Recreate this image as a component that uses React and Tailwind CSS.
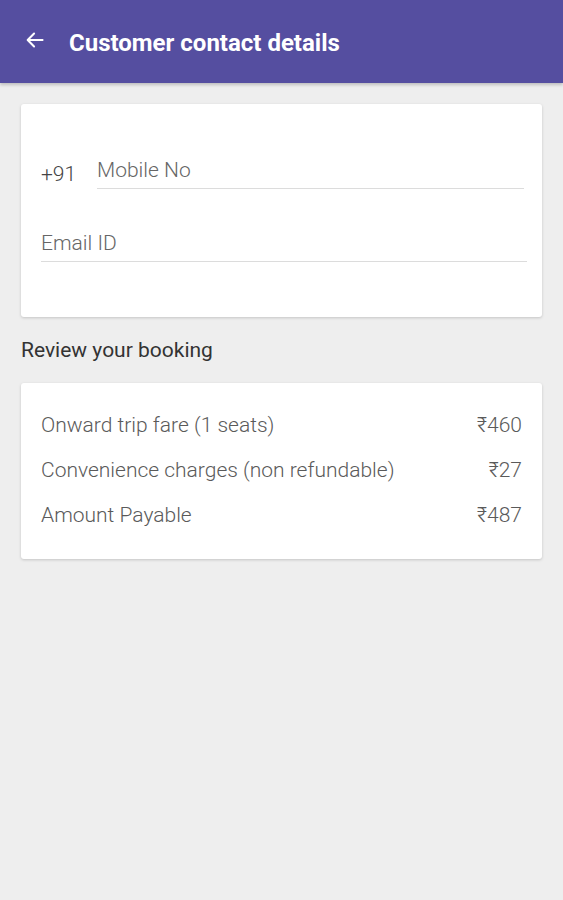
export default function App() {
  return (
    <div className="w-[563px] h-[900px] bg-[#eeeeee] flex flex-col" style={{ fontFamily: "Roboto, 'Noto Sans', sans-serif" }}>
      <header className="h-[83px] bg-[#554ea0] flex items-center shadow-[0_2px_3px_rgba(0,0,0,0.2)]">
        <div className="w-[69px] flex items-center pl-[24px] -mt-[4px]">
          <svg width="22" height="22" viewBox="0 0 24 24" fill="none" stroke="white" strokeWidth="2.2" strokeLinecap="square">
            <path d="M20 12H5" />
            <path d="M11 5l-7 7 7 7" strokeLinecap="round" strokeLinejoin="round" />
          </svg>
        </div>
        <h1 className="text-white text-[24px] font-bold leading-[28px] mt-[3px]">Customer contact details</h1>
      </header>

      <div className="px-[21px] pt-[21px]">
        <div className="bg-white rounded-[3px] shadow-[0_1px_3px_rgba(0,0,0,0.18)] h-[213px] pt-[54px] pl-[20px] pr-[16px]">
          <div className="flex items-end">
            <span className="w-[56px] text-[21px] font-light text-[#444] leading-[24px] mb-[3px]">+91</span>
            <div className="flex-1 border-b border-[#dcdcdc] pb-[6px] mr-[2px]">
              <span className="block text-[21px] font-light text-[#666] leading-[24px]">Mobile No</span>
            </div>
          </div>
          <div className="mt-[42px] border-b border-[#dcdcdc] pb-[6px] -mr-[1px]">
            <span className="block text-[21px] font-light text-[#666] leading-[24px]">Email ID</span>
          </div>
        </div>

        <div className="mt-[21px] text-[21px] text-[#333] leading-[24px]">Review your booking</div>

        <div className="mt-[21px] bg-white rounded-[3px] shadow-[0_1px_3px_rgba(0,0,0,0.18)] h-[176px] pt-[30px] px-[20px] flex flex-col gap-[21px] font-light text-[21px] text-[#5a5a5a]">
          <div className="flex justify-between leading-[24px]"><span>Onward trip fare (1 seats)</span><span>₹460</span></div>
          <div className="flex justify-between leading-[24px]"><span>Convenience charges (non refundable)</span><span>₹27</span></div>
          <div className="flex justify-between leading-[24px]"><span>Amount Payable</span><span>₹487</span></div>
        </div>
      </div>
    </div>
  );
}
